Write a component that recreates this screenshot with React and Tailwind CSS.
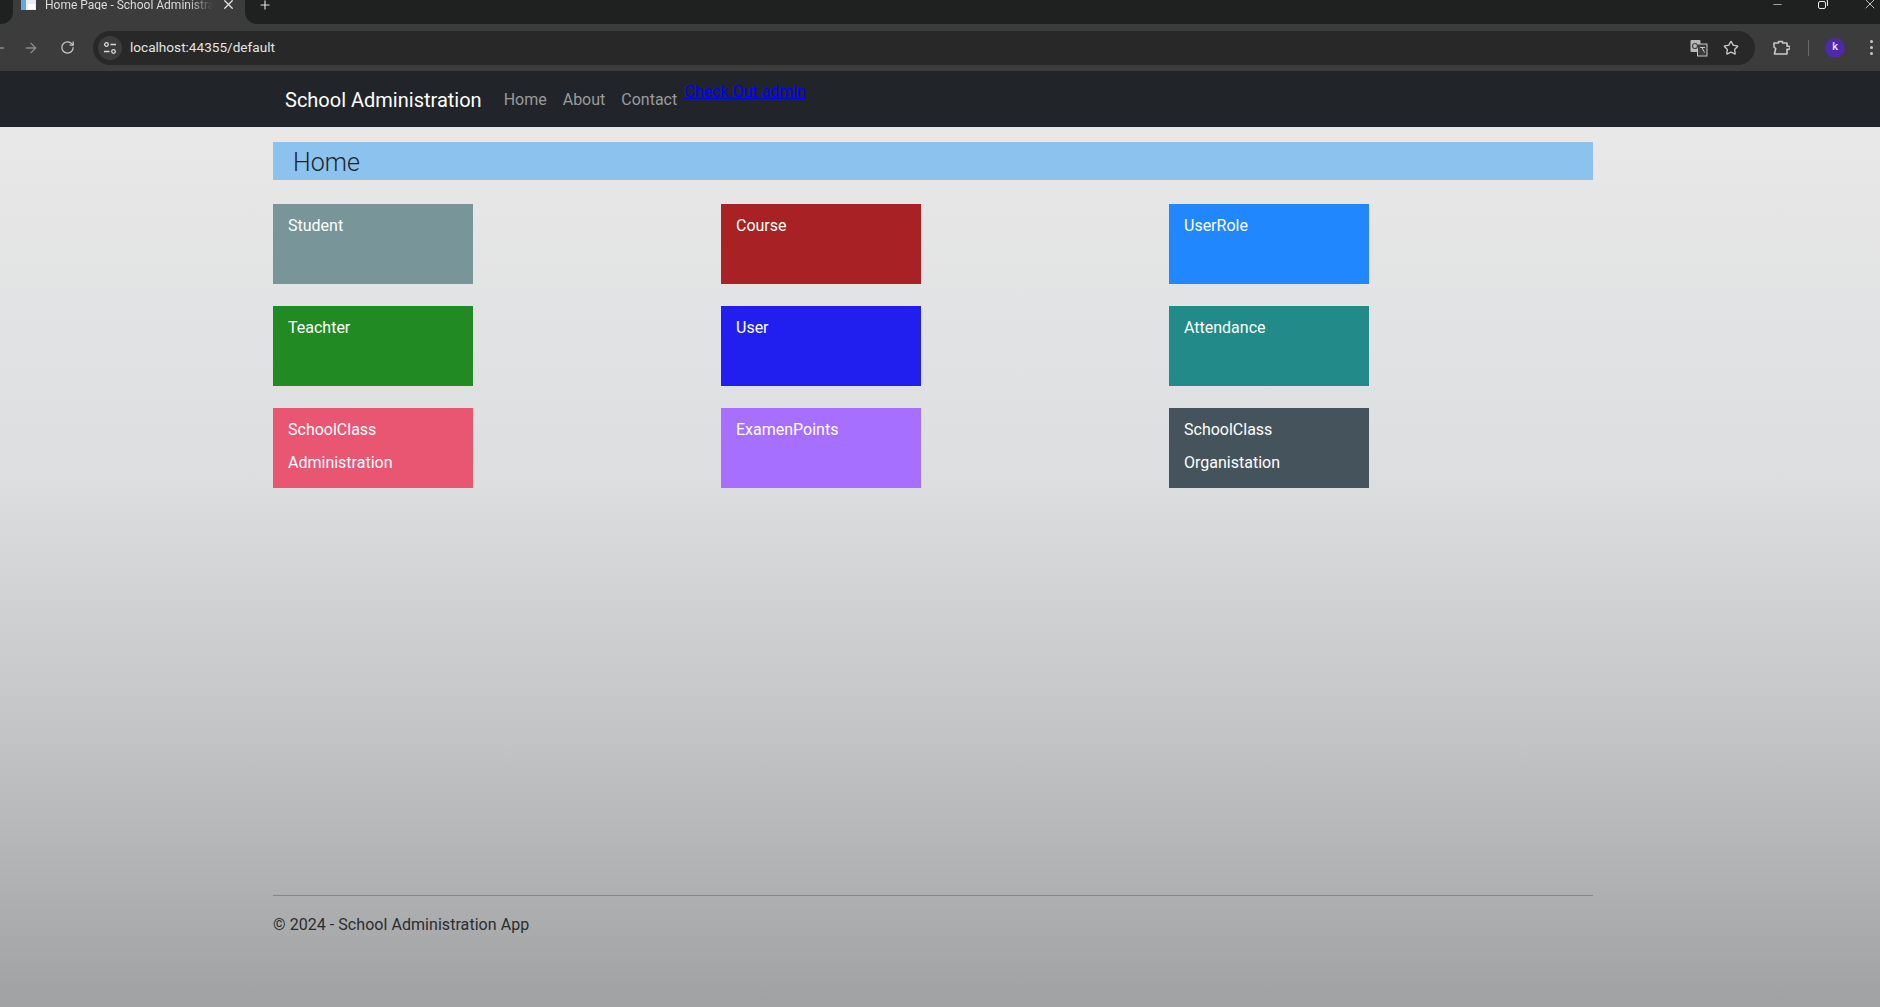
import { ArrowLeft, ArrowRight, RotateCw, Star, Plus, X, Minus } from "lucide-react";

const cards = [
  { lines: ["Student"], bg: "bg-[#78969a]" },
  { lines: ["Course"], bg: "bg-[#a82124]" },
  { lines: ["UserRole"], bg: "bg-[#2087ff]" },
  { lines: ["Teachter"], bg: "bg-[#228a22]" },
  { lines: ["User"], bg: "bg-[#201ff0]" },
  { lines: ["Attendance"], bg: "bg-[#228a88]" },
  { lines: ["SchoolClass", "Administration"], bg: "bg-[#e95672]" },
  { lines: ["ExamenPoints"], bg: "bg-[#a66fff]" },
  { lines: ["SchoolClass", "Organistation"], bg: "bg-[#45545c]" },
];

function BrowserChrome() {
  return (
    <div className="font-['Roboto',sans-serif]">
      {/* Tabs */}
      <div className="h-[24px] bg-[#3c3c3c] flex items-start overflow-hidden relative">
        <div className="w-[13px] h-[24px] bg-[#1f2020] rounded-br-xl" />
        <div className="w-[232px] h-[24px] flex items-start pl-[7px]">
          <svg width="18" height="14" viewBox="0 0 18 14" className="mt-[-3px] shrink-0">
            <rect x="1" y="0" width="15" height="13" fill="#e8eef4" />
            <rect x="1" y="0" width="5" height="13" fill="#6aa5d8" />
            <rect x="8" y="7" width="7" height="5" fill="#ffffff" />
          </svg>
          <span className="ml-[7px] w-[168px] overflow-hidden whitespace-nowrap text-[12px] leading-[10px] text-[#dcdcdc] [mask-image:linear-gradient(90deg,#000_85%,transparent)]">
            Home Page - School Administration
          </span>
          <X size={15} strokeWidth={2} className="ml-[8px] mt-[-3px] text-[#e5e5e5]" />
        </div>
        <div className="flex-1 h-[24px] bg-[#1f2020] rounded-bl-xl flex items-start">
          <Plus size={14} strokeWidth={2} className="ml-[13px] mt-[-2px] text-[#e0e0e0]" />
          <div className="ml-auto mr-[2px] flex items-start text-[#e8e8e8]">
            <Minus size={13} strokeWidth={1.2} className="mt-[-2px]" />
            <svg width="12" height="12" viewBox="0 0 12 12" fill="none" stroke="currentColor" className="ml-[33px] mt-[-2px]">
              <rect x="1.5" y="3.5" width="7" height="7" rx="1.5" />
              <path d="M4 1.5h5a1.5 1.5 0 0 1 1.5 1.5v5" />
            </svg>
            <X size={16} strokeWidth={1.2} className="ml-[33px] mt-[-4px]" />
          </div>
        </div>
      </div>

      {/* Toolbar */}
      <div className="h-[47px] bg-[#3c3c3c] flex items-center">
        <ArrowLeft size={16} className="ml-[-9px] text-[#8a8a8a]" />
        <ArrowRight size={16} className="ml-[16px] text-[#8a8a8a]" />
        <RotateCw size={15} strokeWidth={2} className="ml-[21px] text-[#c8c8c8]" />
        <div className="ml-[18px] w-[1662px] h-[34px] bg-[#282828] rounded-full flex items-center pl-[5px] pr-[16px]">
          <div className="w-[24px] h-[24px] rounded-full bg-[#3c3c3c] flex items-center justify-center">
            <svg width="14" height="14" viewBox="0 0 14 14" fill="none" stroke="#d8d8d8" strokeWidth="1.3">
              <circle cx="3.5" cy="3.5" r="1.8" />
              <path d="M7.5 3.5h5.5M1 10.5h5.5" />
              <circle cx="10.5" cy="10.5" r="1.8" />
            </svg>
          </div>
          <span className="ml-[8px] text-[13.6px] text-[#e4e4e4]">localhost:44355/default</span>
          <svg width="18" height="18" viewBox="0 0 18 18" className="ml-auto">
            <rect x="0.5" y="1" width="10" height="12" rx="1" fill="#b8b8b8" />
            <rect x="7.5" y="5" width="9.5" height="12" fill="#3c3c3c" stroke="#c4c4c4" />
            <circle cx="5" cy="7" r="2.5" fill="none" stroke="#444" strokeWidth="1.2" />
            <path d="M10 8.5h5M12 8.5l2.5 5" stroke="#c4c4c4" fill="none" />
          </svg>
          <Star size={16} strokeWidth={2} className="ml-[15px] text-[#c8c8c8]" />
        </div>
        <svg width="18" height="18" viewBox="0 0 18 18" fill="none" stroke="#c8c8c8" strokeWidth="1.6" strokeLinejoin="round" className="ml-[17px]">
          <path d="M2 4h4.5V2.5h4V4H15v3.2h1.6a1.6 1.6 0 0 1 0 3.2H15V15H2.5l1.2-5.5L2 8z" />
        </svg>
        <div className="ml-[18px] w-[1px] h-[16px] bg-[#6a6a6a]" />
        <div className="ml-[16px] w-[20px] h-[20px] rounded-full bg-[#4f2aa8] flex items-center justify-center text-[11px] font-medium text-[#e8e0ff]">
          k
        </div>
        <div className="ml-[25px] flex flex-col gap-[3px]">
          <span className="w-[3px] h-[3px] rounded-full bg-[#c8c8c8]" />
          <span className="w-[3px] h-[3px] rounded-full bg-[#c8c8c8]" />
          <span className="w-[3px] h-[3px] rounded-full bg-[#c8c8c8]" />
        </div>
      </div>
    </div>
  );
}

export default function App() {
  return (
    <div className="h-[1007px] overflow-hidden flex flex-col font-['Roboto',sans-serif]">
      <BrowserChrome />

      {/* Navbar */}
      <nav className="h-[56px] bg-[#212529] flex items-center pl-[285px] pt-[2px] shrink-0">
        <a className="text-[20px] text-white">School Administration</a>
        <div className="ml-[22px] flex gap-[16px] text-[16px] text-[#9a9b9c]">
          <a>Home</a>
          <a>About</a>
          <a>Contact</a>
        </div>
        <a className="ml-[7px] mt-[-16px] text-[16px] text-[#0000ff] underline">Check Out admin</a>
      </nav>

      {/* Page */}
      <main className="flex-1 flex flex-col pl-[273px] pt-[15px] bg-[linear-gradient(180deg,#e8e8e8_0%,#dddee0_40%,#c4c5c7_68%,#a0a1a3_100%)]">
        <div className="w-[1320px] h-[38px] bg-[#8bc3ee] pl-[20px] text-[25px] font-light leading-[41px] text-[#212529]">Home</div>

        <div className="mt-[24px] grid grid-cols-[448px_448px_448px] gap-y-[22px]">
          {cards.map((card, i) => (
            <div key={i} className={`w-[200px] h-[80px] pl-[15px] pt-[5px] text-[16px] leading-[33px] text-white ${card.bg}`}>
              {card.lines.map((line) => (
                <div key={line}>{line}</div>
              ))}
            </div>
          ))}
        </div>

        {/* Footer */}
        <footer className="mt-[407px] w-[1320px] border-t border-[#858688] pt-[15px] text-[16px] leading-[28px] tracking-[0.05px] text-[#2b2d30]">
          © 2024 - School Administration App
        </footer>
      </main>
    </div>
  );
}
